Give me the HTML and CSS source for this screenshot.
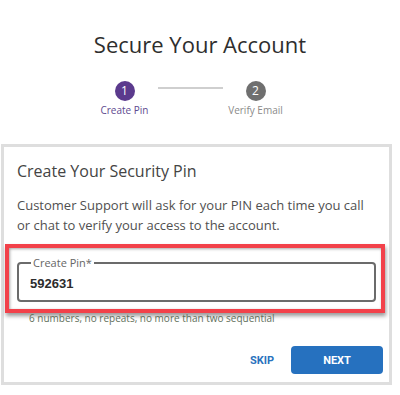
FILE: index.html
```html
<!DOCTYPE html>
<html lang="en">
<head>
    <meta charset="UTF-8">
    <meta name="viewport" content="width=device-width, initial-scale=1.0">
    <title>Secure Your Account</title>
    <link rel="stylesheet" href="styles.css">
</head>
<body>
    <div class="page">
        <h1>Secure Your Account</h1>

        <div class="stepper">
            <div class="step active">
                <div class="circle">1</div>
                <div class="step-label">Create Pin</div>
            </div>
            <div class="step-line"></div>
            <div class="step">
                <div class="circle">2</div>
                <div class="step-label">Verify Email</div>
            </div>
        </div>

        <div class="card">
            <h2>Create Your Security Pin</h2>
            <p class="intro">Customer Support will ask for your PIN each time you call or chat to verify your access to the account.</p>

            <div class="highlight">
                <fieldset class="pin-field">
                    <legend>Create Pin*</legend>
                    <div class="pin-value">592631</div>
                </fieldset>
            </div>
            <div class="hint">6 numbers, no repeats, no more than two sequential</div>

            <div class="actions">
                <button class="btn-skip">SKIP</button>
                <button class="btn-next">NEXT</button>
            </div>
        </div>
    </div>
</body>
</html>
```

FILE: styles.css
```css
body {
    margin: 0;
    padding: 0;
    background: #fff;
    font-family: "Open Sans", Arial, sans-serif;
    color: #333;
}

.page {
    width: 400px;
}

h1 {
    margin: 0;
    padding-top: 28px;
    text-align: center;
    font-size: 22px;
    font-weight: 400;
    line-height: 32px;
    color: #2e2e2e;
}

/* stepper */
.stepper {
    display: flex;
    justify-content: center;
    align-items: flex-start;
    margin-top: 21px;
    padding-right: 20px;
}

.step {
    display: flex;
    flex-direction: column;
    align-items: center;
    width: 66px;
}

.circle {
    width: 20px;
    height: 20px;
    border-radius: 50%;
    background: #6f6f6f;
    color: #fff;
    font-size: 12px;
    line-height: 20px;
    text-align: center;
}

.step-label {
    margin-top: 2px;
    font-size: 10px;
    color: #8a8a8a;
    white-space: nowrap;
}

.step.active .circle {
    background: #5b3a8d;
}

.step.active .step-label {
    color: #5e4a90;
}

.step-line {
    width: 65px;
    height: 2px;
    margin-top: 6px;
    background: #cfcfcf;
}

/* card */
.card {
    margin: 27px 8px 0 1px;
    border: 3px solid #dedede;
    padding: 0 13px 8px;
}

h2 {
    margin: 0;
    padding-top: 13px;
    font-size: 16px;
    font-weight: 400;
    line-height: 22px;
    color: #444;
}

.intro {
    margin: 13px 0 0;
    font-size: 13px;
    line-height: 20px;
    color: #505050;
}

.highlight {
    margin: 9px -9px 0 -12px;
    border: 4px solid #f2414a;
    padding: 9px 5px 7px 8px;
    box-shadow: 1px 3px 4px rgba(0, 0, 0, 0.4), inset 1px 1px 3px rgba(0, 0, 0, 0.35);
}

.pin-field {
    margin: 0;
    border: 2px solid #6b6b6b;
    border-radius: 4px;
    padding: 6px 11px 6px;
}

.pin-field legend {
    margin-left: 1px;
    padding: 0 2px;
    font-size: 11px;
    line-height: 11px;
    color: #666;
}

.pin-value {
    font-family: "Liberation Sans", Arial, sans-serif;
    font-size: 13px;
    font-weight: 700;
    line-height: 20px;
    color: #2c2c2c;
}

.hint {
    margin-top: -1px;
    padding-left: 12px;
    font-size: 10px;
    line-height: 12px;
    color: #5f6f5b;
}

.actions {
    display: flex;
    justify-content: flex-end;
    align-items: center;
    gap: 17px;
    margin: 22px -7px 0 0;
}

.btn-skip,
.btn-next {
    border: none;
    font-family: Roboto, Arial, sans-serif;
    font-size: 11px;
    font-weight: 700;
    cursor: pointer;
}

.btn-skip {
    background: none;
    color: #2a72bd;
    padding: 0;
}

.btn-next {
    width: 92px;
    height: 28px;
    border-radius: 4px;
    background: #2671bf;
    color: #fff;
}
```
